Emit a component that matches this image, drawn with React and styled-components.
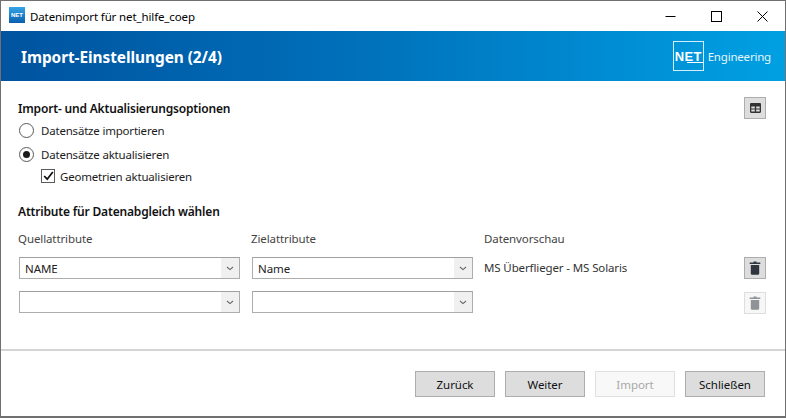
import React from "react";
import styled, { createGlobalStyle } from "styled-components";

const Global = createGlobalStyle`
  html, body { margin: 0; padding: 0; background: #fff; }
  * { box-sizing: border-box; }
`;

const Win = styled.div`
  width: 786px; height: 418px; display: flex; flex-direction: column;
  border: 1px solid #707070; border-bottom-width: 2px; background: #fff; overflow: hidden;
  font-family: "Noto Sans", "Open Sans", sans-serif; font-size: 11.5px; color: #1c1c1c;
`;
const TitleBar = styled.div`
  height: 30px; flex: none; display: flex; align-items: center; padding-left: 8px; gap: 5px; color: #000;
`;
const AppIcon = styled.svg` margin-bottom: 2px; flex: none; `;
const TitleText = styled.span` flex: 1; font-size: 11.5px; letter-spacing: -0.12px; `;
const Controls = styled.div` display: flex; flex: none; `;
const WinBtn = styled.div`
  width: 46px; height: 30px; display: flex; align-items: center; justify-content: center;
`;
const Banner = styled.div`
  height: 50px; flex: none; display: flex; align-items: center; justify-content: space-between;
  padding: 0 14px 0 20px; color: #fff;
  background: linear-gradient(90deg, #00539f 0%, #0070ba 45%, #00a0e3 100%);
`;
const BannerTitle = styled.h1`
  margin: 2px 0 0; font-size: 15.4px; font-weight: 700; font-family: "Noto Sans", sans-serif; letter-spacing: -0.05px;
`;
const Brand = styled.div` display: flex; align-items: center; gap: 4px; font-size: 11.5px; letter-spacing: -0.2px; color: #e6f5fd; `;
const BrandBox = styled.div`
  position: relative; width: 31px; height: 30px; border: 1px solid #d5edfa; display: flex; align-items: center; justify-content: center;
  font-weight: 800; font-size: 13px; letter-spacing: .3px; color: #fff; font-family: "Liberation Sans", sans-serif;
  &::after { content: ""; position: absolute; right: 0; bottom: 7px; width: 16px; height: 1px; background: #fff; }
`;
const Body = styled.div`
  flex: 1; display: flex; flex-direction: column; padding: 16px 19px 0 17px;
`;
const TopRow = styled.div` display: flex; justify-content: space-between; align-items: flex-start; height: 21px; `;
const SectionTitle = styled.div`
  font-weight: 600; font-size: 12px; color: #111; line-height: ${p => p.$lh || 22}px; letter-spacing: -0.18px;
  margin-top: ${p => p.$mt || 0}px;
`;
const IconBtn = styled.div`
  width: 22px; height: 22px; flex: none; display: flex; align-items: center; justify-content: center;
  background: ${p => (p.$off ? "#f7f7f7" : "#dddddd")};
  border: 1px solid ${p => (p.$off ? "#dedede" : "#adadad")};
  margin-top: ${p => p.$mt || 0}px;
`;
const OptionRow = styled.div`
  display: flex; align-items: center; gap: ${p => p.$gap || 7}px; height: ${p => p.$h || 24}px; padding-left: ${p => p.$indent || 1}px; letter-spacing: -0.2px;
`;
const Radio = styled.span`
  width: 15px; height: 15px; border-radius: 50%; border: 1px solid #5a5a5a; background: #fff;
  display: flex; align-items: center; justify-content: center;
  &::after { content: ""; width: 7px; height: 7px; border-radius: 50%; background: ${p => (p.$on ? "#1a1a1a" : "transparent")}; }
`;
const Check = styled.span`
  width: 14px; height: 14px; border: 1px solid #5a5a5a; display: flex; align-items: center; justify-content: center;
`;
const Grid = styled.div`
  display: grid; grid-template-columns: 233px 233px 260px 22px; align-items: center; margin-top: ${p => p.$mt || 0}px;
`;
const Head = styled.div` color: #444; height: 22px; line-height: 22px; letter-spacing: -0.1px; `;
const SelectBox = styled.div`
  width: 221px; height: 22px; margin-left: 1px; border: 1px solid #adadad; border-top-color: #a0a0a0;
  display: flex; align-items: center; background: #fff;
`;
const SelectText = styled.span` flex: 1; padding-left: 5px; letter-spacing: -0.1px; color: #222; `;
const Arrow = styled.span`
  width: 18px; height: 20px; background: #f0f0f0; display: flex; align-items: center; justify-content: center;
`;
const Preview = styled.div` letter-spacing: -0.12px; color: #333; padding-bottom: 2px; `;
const Divider = styled.div` height: 2px; background: #d4d4d4; flex: none; `;
const Footer = styled.div`
  height: 65px; flex: none; display: flex; justify-content: flex-end; align-items: flex-start; gap: 10px; padding: 20px 20px 0 0;
`;
const Btn = styled.div`
  width: 80px; height: 26px; display: flex; align-items: center; justify-content: center;
  background: ${p => (p.$off ? "#f8f8f8" : "#dddddd")};
  border: 1px solid ${p => (p.$off ? "#e0e0e0" : "#adadad")};
  color: ${p => (p.$off ? "#a8a8a8" : "#111")}; letter-spacing: -0.05px;
`;

const Chevron = () => (
  <svg width="8" height="5" viewBox="0 0 8 5"><path d="M1 1l3 2.6L7 1" fill="none" stroke="#666" strokeWidth="1.1" /></svg>
);
const Trash = ({ c }) => (
  <svg width="12" height="14" viewBox="0 0 12 14">
    <path d="M4.5 0.5h3v1h3.8v1.6H.7V1.5h3.8z" fill={c} />
    <path d="M1.8 4h8.4v8.6c0 .8-.5 1.2-1.2 1.2H3c-.7 0-1.2-.4-1.2-1.2z" fill={c} />
  </svg>
);
const Select = ({ value }) => (
  <SelectBox>
    <SelectText>{value}</SelectText>
    <Arrow><Chevron /></Arrow>
  </SelectBox>
);

export default function App() {
  return (
    <>
      <Global />
      <Win>
        <TitleBar>
          <AppIcon width="16" height="16" viewBox="0 0 16 16">
            <defs><linearGradient id="l" x1="0" y1="0" x2="0" y2="1"><stop offset="0" stopColor="#35a5e5" /><stop offset="1" stopColor="#0a5fae" /></linearGradient></defs>
            <rect width="16" height="16" fill="url(#l)" />
            <text x="8" y="10" fontSize="6" fontWeight="800" fontFamily="Liberation Sans" fill="#fff" textAnchor="middle">NET</text>
          </AppIcon>
          <TitleText>Datenimport für net_hilfe_coep</TitleText>
          <Controls>
            <WinBtn><svg width="11" height="11" viewBox="0 0 11 11"><path d="M0.5 5.5h10" stroke="#000" /></svg></WinBtn>
            <WinBtn><svg width="11" height="11" viewBox="0 0 11 11"><rect x=".5" y=".5" width="10" height="10" fill="none" stroke="#000" /></svg></WinBtn>
            <WinBtn><svg width="11" height="11" viewBox="0 0 11 11"><path d="M.5.5l10 10M10.5.5l-10 10" stroke="#000" /></svg></WinBtn>
          </Controls>
        </TitleBar>
        <Banner>
          <BannerTitle>Import-Einstellungen (2/4)</BannerTitle>
          <Brand><BrandBox>NET</BrandBox>Engineering</Brand>
        </Banner>
        <Body>
          <TopRow>
            <SectionTitle $lh={24}>Import- und Aktualisierungsoptionen</SectionTitle>
            <IconBtn>
              <svg width="11" height="10" viewBox="0 0 11 10"><path fill="#333" fillRule="evenodd" d="M0 1.2C0 .5.5 0 1.2 0h8.6c.7 0 1.2.5 1.2 1.2v7.6c0 .7-.5 1.2-1.2 1.2H1.200C.5 10 0 9.500 0 8.800zM1.300 3.500v2h3.500v-2zm4.900 0v2h3.500v-2zM1.300 6.500v2h3.500v-2zm4.900 0v2h3.500v-2z" /></svg>
            </IconBtn>
          </TopRow>
          <OptionRow><Radio />Datensätze importieren</OptionRow>
          <OptionRow><Radio $on />Datensätze aktualisieren</OptionRow>
          <OptionRow $indent={23} $gap={5} $h={20}>
            <Check><svg width="11" height="10" viewBox="0 0 11 10"><path d="M1.200 5l3 3.200L9.800 1" fill="none" stroke="#111" strokeWidth="1.800" /></svg></Check>
            Geometrien aktualisieren
          </OptionRow>
          <SectionTitle $mt={15}>Attribute für Datenabgleich wählen</SectionTitle>
          <Grid $mt={5}>
            <Head>Quellattribute</Head>
            <Head>Zielattribute</Head>
            <Head>Datenvorschau</Head>
            <span />
          </Grid>
          <Grid $mt={7}>
            <Select value="NAME" />
            <Select value="Name" />
            <Preview>MS Überflieger - MS Solaris</Preview>
            <IconBtn><Trash c="#2f3640" /></IconBtn>
          </Grid>
          <Grid $mt={11}>
            <Select />
            <Select />
            <span />
            <IconBtn $off $mt={2}><Trash c="#8f9296" /></IconBtn>
          </Grid>
        </Body>
        <Divider />
        <Footer>
          <Btn>Zurück</Btn>
          <Btn>Weiter</Btn>
          <Btn $off>Import</Btn>
          <Btn>Schließen</Btn>
        </Footer>
      </Win>
    </>
  );
}
